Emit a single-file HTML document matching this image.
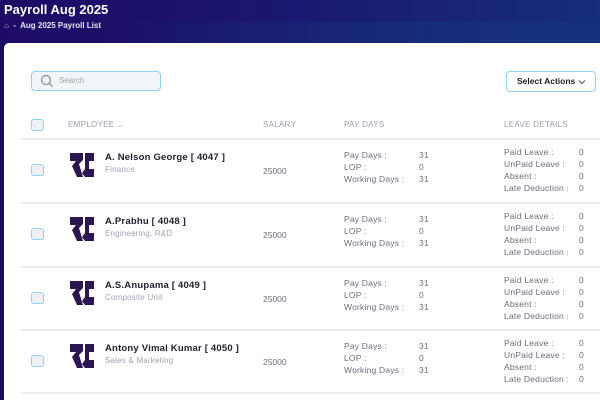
<!DOCTYPE html>
<html><head><meta charset="utf-8"><style>
*{margin:0;padding:0;box-sizing:border-box}
html,body{width:600px;height:400px;overflow:hidden}
body{font-family:"Liberation Sans",sans-serif;background:#1d0b5e;position:relative}
.hdr{position:absolute;left:0;top:0;width:600px;height:44px;background:linear-gradient(90deg,#1e0b65 0%,#1a1870 50%,#162f7a 100%)}
.hdr2{position:absolute;left:120px;top:22px;width:480px;height:22px;background:linear-gradient(90deg,rgba(22,40,120,0) 0%,rgba(22,50,125,.6) 60%,#15337c 100%)}
.title{position:absolute;left:4px;top:2px;color:#fff;font-weight:bold;font-size:13px}
.bc{position:absolute;left:4px;top:21px;color:#e6e6f5;font-weight:bold;font-size:8px}
.card{position:absolute;left:4px;top:43px;width:610px;height:357px;background:#fff;border-radius:5px 0 0 0}
.abs{position:absolute}
.search{left:31px;top:71px;width:130px;height:20px;border:1.5px solid #8fd0f5;border-radius:4px;background:#f2f5f9}
.sel{left:506px;top:71px;width:90px;height:21px;border:1.5px solid #8fd0f5;border-radius:4px;background:#fff;font-size:8.5px;font-weight:bold;color:#222;padding:4px 0 0 10px}
.cb{width:13px;height:12px;border:1.5px solid #8fd0f5;border-radius:3px;background:#eef2f7;position:absolute;left:31px}
.th{font-size:8px;color:#9a9cb0;top:120px;position:absolute;letter-spacing:.3px}
.line{position:absolute;left:21px;width:590px;height:1.5px;background:#ebebf0}
.name{position:absolute;left:105px;font-size:9.5px;font-weight:bold;color:#1e1e2d;letter-spacing:.2px}
.dept{position:absolute;left:105px;font-size:8px;color:#a0a2b5;letter-spacing:.2px}
.sal{position:absolute;left:263px;font-size:8.5px;color:#6b6d80}
.lab{position:absolute;font-size:8.5px;color:#6b6d80;line-height:12px;letter-spacing:.2px}
</style></head><body>
<div class="hdr"></div><div class="hdr2"></div>
<div class="title">Payroll Aug 2025</div>
<div class="bc"><span style="color:#bbb">&#8962;</span> &nbsp;-&nbsp; Aug 2025 Payroll List</div>
<div class="card"></div>
<div class="abs search"><svg width="14" height="14" style="position:absolute;left:8px;top:2px" viewBox="0 0 14 14"><circle cx="6" cy="6" r="4.5" fill="none" stroke="#8a8c9a" stroke-width="1.2"/><line x1="9.3" y1="9.3" x2="12.5" y2="12.5" stroke="#8a8c9a" stroke-width="1.2"/></svg><span style="position:absolute;left:27px;top:4px;font-size:8px;color:#a0a2b0">Search</span></div>
<div class="abs sel">Select Actions<svg width="8" height="6" style="position:absolute;right:9px;top:7px" viewBox="0 0 8 6"><path d="M1 1.5L4 4.5L7 1.5" fill="none" stroke="#555" stroke-width="1"/></svg></div>
<div class="cb" style="top:119px"></div>
<div class="th" style="left:68px">EMPLOYEE <span style="font-size:7px">&#8964;</span></div>
<div class="th" style="left:263px">SALARY</div>
<div class="th" style="left:344px">PAY DAYS</div>
<div class="th" style="left:504px">LEAVE DETAILS</div>
<div class="line" style="top:138px"></div>

<div class="cb" style="top:164px"></div>
<svg class="abs" style="left:70px;top:153px" width="25" height="24" viewBox="0 0 25 24"><path d="M0 0H13V7L9 11L13 24H7L2 13L6 8H0Z" fill="#2a1650"/><path d="M15 0H24V8H19V16H24V24H15L12 20L15 16Z" fill="#2a1650"/></svg>
<div class="name" style="top:152px">A. Nelson George [ 4047 ]</div>
<div class="dept" style="top:165px">Finance</div>
<div class="sal" style="top:166px">25000</div>
<div class="lab" style="left:344px;top:149px">Pay Days :<br>LOP :<br>Working Days :</div>
<div class="lab" style="left:419px;top:149px">31<br>0<br>31</div>
<div class="lab" style="left:504px;top:146px">Paid Leave :<br>UnPaid Leave :<br>Absent :<br>Late Deduction :</div>
<div class="lab" style="left:579px;top:146px">0<br>0<br>0<br>0</div>
<div class="line" style="top:202px"></div>

<div class="cb" style="top:228px"></div>
<svg class="abs" style="left:70px;top:217px" width="25" height="24" viewBox="0 0 25 24"><path d="M0 0H13V7L9 11L13 24H7L2 13L6 8H0Z" fill="#2a1650"/><path d="M15 0H24V8H19V16H24V24H15L12 20L15 16Z" fill="#2a1650"/></svg>
<div class="name" style="top:216px">A.Prabhu [ 4048 ]</div>
<div class="dept" style="top:229px">Engineering, R&amp;D</div>
<div class="sal" style="top:230px">25000</div>
<div class="lab" style="left:344px;top:213px">Pay Days :<br>LOP :<br>Working Days :</div>
<div class="lab" style="left:419px;top:213px">31<br>0<br>31</div>
<div class="lab" style="left:504px;top:210px">Paid Leave :<br>UnPaid Leave :<br>Absent :<br>Late Deduction :</div>
<div class="lab" style="left:579px;top:210px">0<br>0<br>0<br>0</div>
<div class="line" style="top:266px"></div>

<div class="cb" style="top:292px"></div>
<svg class="abs" style="left:70px;top:281px" width="25" height="24" viewBox="0 0 25 24"><path d="M0 0H13V7L9 11L13 24H7L2 13L6 8H0Z" fill="#2a1650"/><path d="M15 0H24V8H19V16H24V24H15L12 20L15 16Z" fill="#2a1650"/></svg>
<div class="name" style="top:280px">A.S.Anupama [ 4049 ]</div>
<div class="dept" style="top:293px">Composite Unit</div>
<div class="sal" style="top:294px">25000</div>
<div class="lab" style="left:344px;top:277px">Pay Days :<br>LOP :<br>Working Days :</div>
<div class="lab" style="left:419px;top:277px">31<br>0<br>31</div>
<div class="lab" style="left:504px;top:274px">Paid Leave :<br>UnPaid Leave :<br>Absent :<br>Late Deduction :</div>
<div class="lab" style="left:579px;top:274px">0<br>0<br>0<br>0</div>
<div class="line" style="top:329px"></div>

<div class="cb" style="top:355px"></div>
<svg class="abs" style="left:70px;top:344px" width="25" height="24" viewBox="0 0 25 24"><path d="M0 0H13V7L9 11L13 24H7L2 13L6 8H0Z" fill="#2a1650"/><path d="M15 0H24V8H19V16H24V24H15L12 20L15 16Z" fill="#2a1650"/></svg>
<div class="name" style="top:343px">Antony Vimal Kumar [ 4050 ]</div>
<div class="dept" style="top:356px">Sales &amp; Marketing</div>
<div class="sal" style="top:357px">25000</div>
<div class="lab" style="left:344px;top:340px">Pay Days :<br>LOP :<br>Working Days :</div>
<div class="lab" style="left:419px;top:340px">31<br>0<br>31</div>
<div class="lab" style="left:504px;top:337px">Paid Leave :<br>UnPaid Leave :<br>Absent :<br>Late Deduction :</div>
<div class="lab" style="left:579px;top:337px">0<br>0<br>0<br>0</div>
<div class="line" style="top:392px"></div>
</body></html>
